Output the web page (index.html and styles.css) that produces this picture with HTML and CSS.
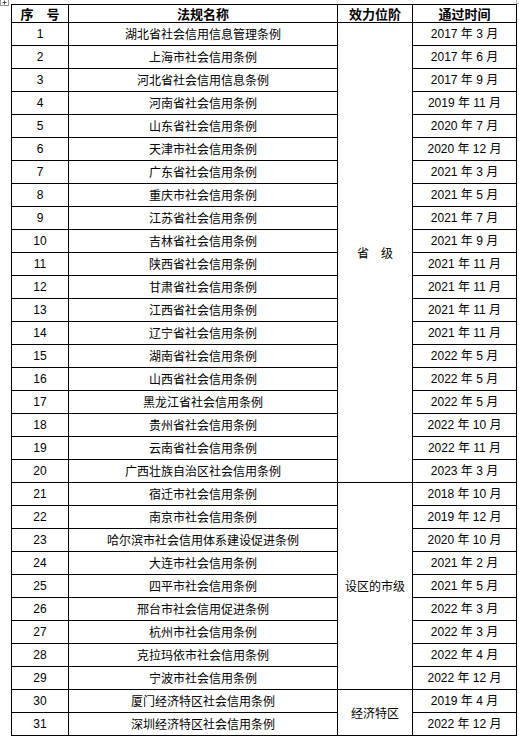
FILE: index.html
```html
<!DOCTYPE html>
<html lang="zh">
<head>
<meta charset="utf-8">
<link rel="stylesheet" href="styles.css">
</head>
<body>
<div class="page">
  <div class="handle"><svg width="9" height="7" viewBox="0 0 9 7"><rect x="0.5" y="0.5" width="8" height="6" fill="#fff" stroke="#9a9a9a"/><path d="M4.5 1.5v4M2.5 3.5h4" stroke="#555" stroke-width="1"/></svg></div>
  <div class="corner-tr"></div>
  <table class="laws">
    <colgroup>
      <col class="c1"><col class="c2"><col class="c3"><col class="c4">
    </colgroup>
    <thead>
      <tr class="head"><th>序　号</th><th>法规名称</th><th>效力位阶</th><th>通过时间</th></tr>
    </thead>
    <tbody>
      <tr><td>1</td><td>湖北省社会信用信息管理条例</td><td class="level" rowspan="20">省　级</td><td class="date">2017 年 3 月</td></tr>
      <tr><td>2</td><td>上海市社会信用条例</td><td class="date">2017 年 6 月</td></tr>
      <tr><td>3</td><td>河北省社会信用信息条例</td><td class="date">2017 年 9 月</td></tr>
      <tr><td>4</td><td>河南省社会信用条例</td><td class="date">2019 年 11 月</td></tr>
      <tr><td>5</td><td>山东省社会信用条例</td><td class="date">2020 年 7 月</td></tr>
      <tr><td>6</td><td>天津市社会信用条例</td><td class="date">2020 年 12 月</td></tr>
      <tr><td>7</td><td>广东省社会信用条例</td><td class="date">2021 年 3 月</td></tr>
      <tr><td>8</td><td>重庆市社会信用条例</td><td class="date">2021 年 5 月</td></tr>
      <tr><td>9</td><td>江苏省社会信用条例</td><td class="date">2021 年 7 月</td></tr>
      <tr><td>10</td><td>吉林省社会信用条例</td><td class="date">2021 年 9 月</td></tr>
      <tr><td>11</td><td>陕西省社会信用条例</td><td class="date">2021 年 11 月</td></tr>
      <tr><td>12</td><td>甘肃省社会信用条例</td><td class="date">2021 年 11 月</td></tr>
      <tr><td>13</td><td>江西省社会信用条例</td><td class="date">2021 年 11 月</td></tr>
      <tr><td>14</td><td>辽宁省社会信用条例</td><td class="date">2021 年 11 月</td></tr>
      <tr><td>15</td><td>湖南省社会信用条例</td><td class="date">2022 年 5 月</td></tr>
      <tr><td>16</td><td>山西省社会信用条例</td><td class="date">2022 年 5 月</td></tr>
      <tr><td>17</td><td>黑龙江省社会信用条例</td><td class="date">2022 年 5 月</td></tr>
      <tr><td>18</td><td>贵州省社会信用条例</td><td class="date">2022 年 10 月</td></tr>
      <tr><td>19</td><td>云南省社会信用条例</td><td class="date">2022 年 11 月</td></tr>
      <tr><td>20</td><td>广西壮族自治区社会信用条例</td><td class="date">2023 年 3 月</td></tr>
      <tr><td>21</td><td>宿迁市社会信用条例</td><td class="level" rowspan="9">设区的市级</td><td class="date">2018 年 10 月</td></tr>
      <tr><td>22</td><td>南京市社会信用条例</td><td class="date">2019 年 12 月</td></tr>
      <tr><td>23</td><td>哈尔滨市社会信用体系建设促进条例</td><td class="date">2020 年 10 月</td></tr>
      <tr><td>24</td><td>大连市社会信用条例</td><td class="date">2021 年 2 月</td></tr>
      <tr><td>25</td><td>四平市社会信用条例</td><td class="date">2021 年 5 月</td></tr>
      <tr><td>26</td><td>邢台市社会信用促进条例</td><td class="date">2022 年 3 月</td></tr>
      <tr><td>27</td><td>杭州市社会信用条例</td><td class="date">2022 年 3 月</td></tr>
      <tr><td>28</td><td>克拉玛依市社会信用条例</td><td class="date">2022 年 4 月</td></tr>
      <tr><td>29</td><td>宁波市社会信用条例</td><td class="date">2022 年 12 月</td></tr>
      <tr><td>30</td><td>厦门经济特区社会信用条例</td><td class="level" rowspan="2">经济特区</td><td class="date">2019 年 4 月</td></tr>
      <tr><td>31</td><td>深圳经济特区社会信用条例</td><td class="date">2022 年 12 月</td></tr>
    </tbody>
  </table>
  <div class="corner-br"></div>
</div>
</body>
</html>
```
FILE: styles.css
```css
html, body {
  margin: 0;
  padding: 0;
  background: #fff;
}
.page {
  position: relative;
  padding: 4px 0 0 11px;
  font-family: "Noto Sans CJK SC", "Liberation Sans", sans-serif;
  color: #000;
}
.handle {
  position: absolute;
  left: 0;
  top: -1px;
  line-height: 0;
}
.corner-tr {
  position: absolute;
  left: 516px;
  top: 0;
  width: 2px;
  height: 3px;
  border-left: 1px solid #b5b5b5;
  border-bottom: 1px solid #b5b5b5;
}
.corner-br {
  position: absolute;
  left: 516px;
  top: 736px;
  width: 3px;
  height: 3px;
  border-left: 1px solid #b5b5b5;
  border-top: 1px solid #b5b5b5;
}
.laws {
  border-collapse: collapse;
  table-layout: fixed;
  width: 505px;
}
.c1 { width: 57px; }
.c2 { width: 269px; }
.c3 { width: 75px; }
.c4 { width: 104px; }
.laws th, .laws td {
  border: 1px solid #000;
  padding: 0;
  text-align: center;
  vertical-align: middle;
  font-size: 12px;
  line-height: 14px;
  white-space: nowrap;
  overflow: hidden;
}
.laws th {
  font-weight: bold;
  font-size: 13px;
}
.head th {
  height: 17px;
}
.laws tbody td {
  height: 22px;
}
.laws td.date {
  font-family: "Liberation Sans", "Noto Sans CJK SC", sans-serif;
  font-size: 12px;
}
.laws td:first-child {
  font-family: "Liberation Sans", sans-serif;
}
```
